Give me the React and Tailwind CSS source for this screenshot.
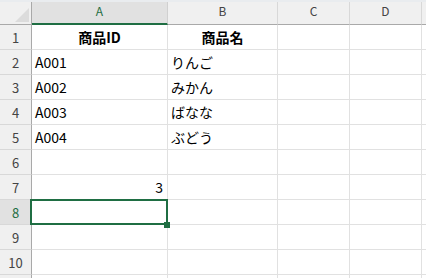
import React from "react";

const cols = [
  { key: "A", w: "w-[136px]" },
  { key: "B", w: "w-[110px]" },
  { key: "C", w: "w-[72px]" },
  { key: "D", w: "w-[72px]" },
  { key: "E", w: "w-[40px]" },
];

const data = {
  1: { A: { t: "商品ID", bold: true, center: true }, B: { t: "商品名", bold: true, center: true } },
  2: { A: { t: "A001" }, B: { t: "りんご" } },
  3: { A: { t: "A002" }, B: { t: "みかん" } },
  4: { A: { t: "A003" }, B: { t: "ばなな" } },
  5: { A: { t: "A004" }, B: { t: "ぶどう" } },
  7: { A: { t: "3", right: true } },
};

const font = { fontFamily: '"Noto Sans CJK JP", "Noto Sans", sans-serif' };

function Cell({ col, row }) {
  const d = data[row] && data[row][col.key];
  const selected = row === 8 && col.key === "A";
  let align = "justify-start pl-[3px]";
  if (d && d.center) align = "justify-center";
  if (d && d.right) align = "justify-end pr-[4px]";
  return (
    <div
      className={`relative ${col.w} shrink-0 h-full flex items-center ${align} border-r border-b border-[#e1e1e1] bg-white text-[14px] leading-none text-black whitespace-nowrap`}
    >
      {d && <span className={d.bold ? "font-bold" : ""}>{d.t}</span>}
      {selected && (
        <>
          <div className="absolute left-[-2px] top-[-1px] right-[-1px] bottom-[-1px] border-2 border-[#1f6e43] z-10" />
          <div className="absolute right-[-3px] bottom-[-4px] w-[6px] h-[6px] bg-[#1f6e43] z-20" />
        </>
      )}
    </div>
  );
}

export default function App() {
  const rows = [1, 2, 3, 4, 5, 6, 7, 8, 9, 10, 11];
  return (
    <div className="w-[426px] h-[278px] overflow-hidden bg-white" style={font}>
      <div className="h-[2px] bg-[#e9ecef]" />
      {/* column header row */}
      <div className="flex h-[23px]">
        <div className="relative w-[32px] shrink-0 h-full bg-[#f0f0f0] border-r border-b border-[#a9a9a9]">
          <svg className="absolute left-[15px] top-[6px]" width="14" height="14" viewBox="0 0 14 14">
            <polygon points="14,0 14,14 0,14" fill="#dcdcdc" />
          </svg>
        </div>
        {cols.map((c) => {
          const sel = c.key === "A";
          return (
            <div
              key={c.key}
              className={`${c.w} shrink-0 h-full flex items-center justify-center pb-[4px] text-[12px] leading-none border-r ${
                sel
                  ? "bg-[#e1e1e1] text-[#1f6e43] border-b-2 border-b-[#1f6e43] border-r-[#d0d0d0]"
                  : "bg-[#f0f0f0] text-[#444444] border-b border-b-[#a9a9a9] border-r-[#d8d8d8]"
              }`}
            >
              {c.key !== "E" ? c.key : ""}
            </div>
          );
        })}
      </div>
      {rows.map((r) => {
        const sel = r === 8;
        return (
          <div key={r} className="flex h-[25px]">
            <div
              className={`w-[32px] shrink-0 h-full flex items-center justify-center text-[13px] leading-none border-r border-r-[#a9a9a9] border-b border-b-[#d8d8d8] ${
                sel ? "bg-[#e1e1e1] text-[#1f6e43]" : "bg-[#f0f0f0] text-[#444444]"
              }`}
            >
              {r <= 10 ? r : ""}
            </div>
            {cols.map((c) => (
              <Cell key={c.key} col={c} row={r} />
            ))}
          </div>
        );
      })}
    </div>
  );
}
